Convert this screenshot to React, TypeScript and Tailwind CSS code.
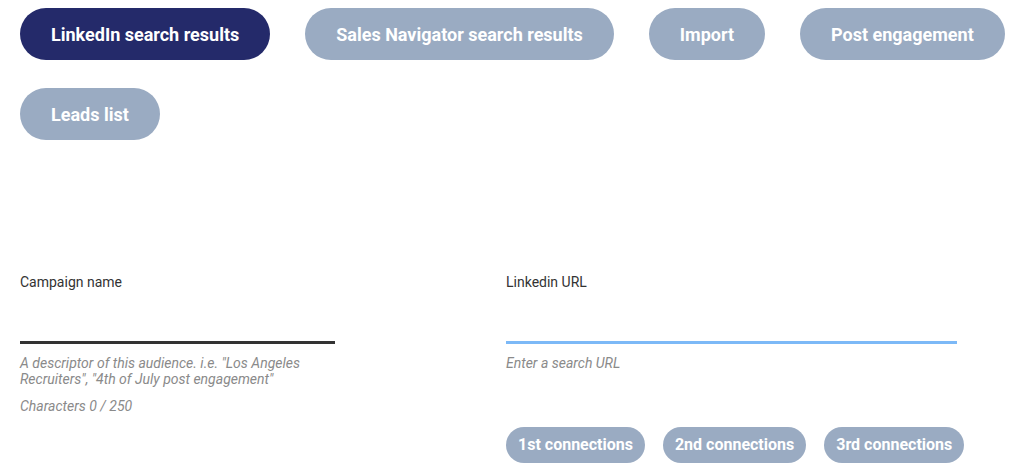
import React from 'react'

const tabs = ['LinkedIn search results', 'Sales Navigator search results', 'Import', 'Post engagement', 'Leads list']
const connections = ['1st connections', '2nd connections', '3rd connections']

export default function App() {
  const active = 0

  return (
    <div className="min-h-[472px] bg-white pl-5 pt-2 font-['Roboto',sans-serif]">
      {/* Source tabs */}
      <div className="flex flex-wrap gap-x-[35px] gap-y-[28px] pr-4">
        {tabs.map((t, i) => (
          <button
            key={t}
            className={
              'h-[52px] whitespace-nowrap rounded-full px-[31px] text-[18px] font-bold text-white ' +
              (i === active ? 'bg-[#242a6a]' : 'bg-[#9aabc2]')
            }
          >
            {t}
          </button>
        ))}
      </div>

      {/* Form */}
      <div className="mt-[134px] flex">
        <div className="w-[315px]">
          <div className="text-[14px] leading-4 text-[#333]">Campaign name</div>
          <div className="mt-[51px] h-[3px] bg-[#333]" />
          <div className="mt-[11px] text-[14px] italic leading-4 text-[#8a8a8a]">
            A descriptor of this audience. i.e. "Los Angeles Recruiters", "4th of July post engagement"
          </div>
          <div className="mt-[11px] text-[14px] italic leading-4 text-[#8a8a8a]">Characters 0 / 250</div>
        </div>

        <div className="ml-[171px] w-[451px]">
          <div className="text-[14px] leading-4 text-[#333]">Linkedin URL</div>
          <div className="mt-[51px] h-[3px] bg-[#7cb9f7]" />
          <div className="mt-[11px] text-[14px] italic leading-4 text-[#8a8a8a]">Enter a search URL</div>
          <div className="mt-[56px] flex gap-[18px]">
            {connections.map((c) => (
              <button
                key={c}
                className="h-9 whitespace-nowrap rounded-full bg-[#9aabc2] px-[12px] text-[16px] font-bold text-white"
              >
                {c}
              </button>
            ))}
          </div>
        </div>
      </div>
    </div>
  )
}
